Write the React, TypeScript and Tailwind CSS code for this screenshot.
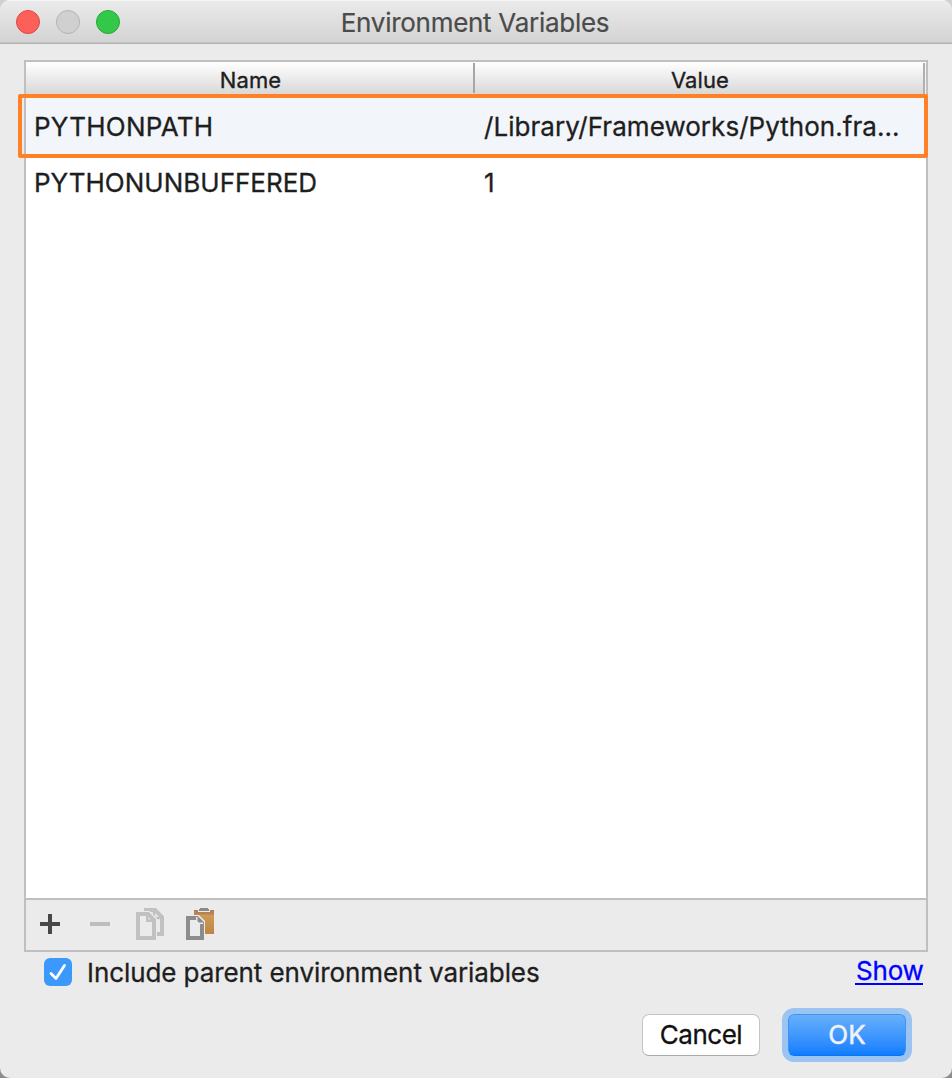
import React from "react";

const variables = [
  { name: "PYTHONPATH", value: "/Library/Frameworks/Python.fra...", selected: true },
  { name: "PYTHONUNBUFFERED", value: "1", selected: false },
];

function TitleBar() {
  return (
    <header className="grid h-11 shrink-0 grid-cols-[1fr_auto_1fr] items-center border-b border-[#b1b1b1] bg-linear-to-b from-[#ebebeb] to-[#d3d3d3] px-4 shadow-[inset_0_1px_0_#f6f6f6,inset_0_-1px_0_#c6c6c6]">
      <div className="flex gap-4 pt-px">
        <span className="size-6 rounded-full border border-[#e2463f] bg-[#fc605b]" />
        <span className="size-6 rounded-full border border-[#b3b3b3] bg-[#d0d0d0]" />
        <span className="size-6 rounded-full border border-[#24a936] bg-[#34c84a]" />
      </div>
      <h1 className="-ml-[2px] h-[43px] pt-px text-[26px] leading-[43px] tracking-[-0.28px] text-[#4b4b4b] [-webkit-text-stroke:0.2px]">Environment Variables</h1>
    </header>
  );
}

function CopyIcon() {
  return (
    <svg className="h-8 w-7" viewBox="0 0 28 32" fill="none" stroke="#c1c1c1">
      <path d="M8 2H19L26 9V26H20.500" strokeWidth="4" />
      <path d="M18 2V10H26" strokeWidth="2.500" />
      <path d="M0 4H13L20 11V32H0Z" fill="#ebebeb" stroke="#ebebeb" strokeWidth="2" />
      <path d="M2 6H12L18 12V30H2Z" strokeWidth="4" />
      <path d="M11.200 5V12.800H19" strokeWidth="2.400" />
    </svg>
  );
}

function PasteIcon() {
  return (
    <svg className="h-8 w-7" viewBox="0 0 28 32" fill="none">
      <defs>
        <linearGradient id="board" x1="0" y1="0" x2="0" y2="1">
          <stop offset="0" stopColor="#b47a50" />
          <stop offset="0.180" stopColor="#b98455" />
          <stop offset="0.200" stopColor="#cd9c58" />
          <stop offset="1" stopColor="#bd8640" />
        </linearGradient>
      </defs>
      <path d="M8 2H28V26H8Z" fill="url(#board)" />
      <path d="M12 0H24V4H12Z" fill="#ebebeb" />
      <path d="M14 0H22V1H23V3H13V1H14Z" fill="#8a8a8a" />
      <path d="M0 7H13L19 13V32H0Z" fill="#ebebeb" />
      <path d="M2 10H11L16 15V30H2Z" fill="#ebebeb" stroke="#8c8c8c" strokeWidth="4" />
      <path d="M10.800 9V15.200H17" stroke="#ebebeb" strokeWidth="1.400" />
    </svg>
  );
}

function Toolbar() {
  return (
    <div className="flex h-[52px] shrink-0 items-center gap-[26px] border-t-2 border-[#bfbfbf] bg-[#ebebeb] pb-[2px] pl-[14px]">
      <button aria-label="Add" className="-mr-[2px] flex h-8 items-center">
        <svg className="size-5" viewBox="0 0 20 20" fill="#484848">
          <path d="M8 0h4v8h8v4h-8v8H8v-8H0V8h8Z" />
        </svg>
      </button>
      <button aria-label="Remove" className="ml-[6px] flex h-8 items-center">
        <svg className="size-5" viewBox="0 0 20 20" fill="#bdbdbd">
          <path d="M0 8h20v4H0Z" />
        </svg>
      </button>
      <button aria-label="Copy"><CopyIcon /></button>
      <button aria-label="Paste" className="-ml-[4px]"><PasteIcon /></button>
    </div>
  );
}

function VariablesTable() {
  return (
    <section className="relative mx-6 mt-4 flex h-[892px] w-[904px] shrink-0 flex-col border-2 border-[#bfbfbf] bg-white">
      <div className="flex h-[34px] shrink-0 bg-linear-to-b from-white to-[#d6d6d6] pt-px text-[22px] leading-[34px] text-[#1e1e1e] [-webkit-text-stroke:0.35px]">
        <div className="flex h-[30px] w-[449px] justify-center border-r-2 border-[#a6a6a6] pl-[2px]">
          <span className="tracking-[0.1px]">Name</span>
        </div>
        <div className="flex w-[450px] justify-center border-r-2 border-[#b0b0b0] pl-[2px]">
          <span className="tracking-[0.1px]">Value</span>
        </div>
        <div className="w-px bg-[#f4f4f4]" />
      </div>
      <div className="grow">
        {variables.map((v) => (
          <div
            key={v.name}
            className={`flex items-center text-[26px] text-[#1e1e1e] [-webkit-text-stroke:0.3px] ${v.selected ? "h-[60px] bg-[#f2f5fa]" : "h-14 pb-1"}`}
          >
            <span className={`w-[450px] pl-2 ${v.selected ? "tracking-[0.25px]" : "tracking-normal"}`}>{v.name}</span>
            <span className="pl-2 tracking-[0.04px]">{v.value}</span>
          </div>
        ))}
      </div>
      <Toolbar />
      <div className="pointer-events-none absolute -left-2 top-8 h-16 w-[910px] rounded-[2px] border-4 border-[#ff8026]" />
    </section>
  );
}

export default function App() {
  return (
    <div className="h-[1078px] w-[952px] bg-linear-to-b from-[#d0d0d0] to-[#8c8c8c] font-['Inter',sans-serif]">
      <main className="flex h-full flex-col overflow-hidden rounded-[10px] bg-[#ebebeb]">
        <TitleBar />
        <VariablesTable />
        <div className="flex h-10 shrink-0 items-center pl-11 pr-[29px] text-[26px] text-[#1e1e1e]">
          <label className="flex items-center">
            <span className="flex size-7 items-center justify-center rounded-[6px] bg-[#3b99fc]">
              <svg className="size-7" viewBox="0 0 28 28" fill="none" stroke="white" strokeWidth="2.800" strokeLinecap="round" strokeLinejoin="round">
                <path d="M7 15.500L12 20.500L20.500 7.500" />
              </svg>
            </span>
            <span className="ml-[15px] tracking-[-0.08px] [-webkit-text-stroke:0.3px]">Include parent environment variables</span>
          </label>
          <a className="-mt-px ml-auto h-[27px] w-[68px] border-b-2 border-[#0000ff] pl-px text-center leading-[25px] tracking-[-0.2px] text-[#0000ff] [-webkit-text-stroke:0.3px]">Show</a>
        </div>
        <div className="mt-[22px] flex justify-end gap-7 pr-[46px] text-[26px] leading-[40px]">
          <button className="h-[42px] w-[118px] rounded-[7px] border border-[#c4c4c4] border-b-[#aaaaaa] bg-white tracking-[-0.5px] text-[#111] [-webkit-text-stroke:0.3px]">Cancel</button>
          <button className="h-[42px] w-[118px] rounded-[6px] border border-[#3d92f5] border-b-[#0a74f6] bg-linear-to-b from-[#66b0fb] to-[#0d7dff] text-[#f2f2f5] shadow-[0_0_0_6px_#9bc4f3] [-webkit-text-stroke:0.5px]">OK</button>
        </div>
      </main>
    </div>
  );
}
